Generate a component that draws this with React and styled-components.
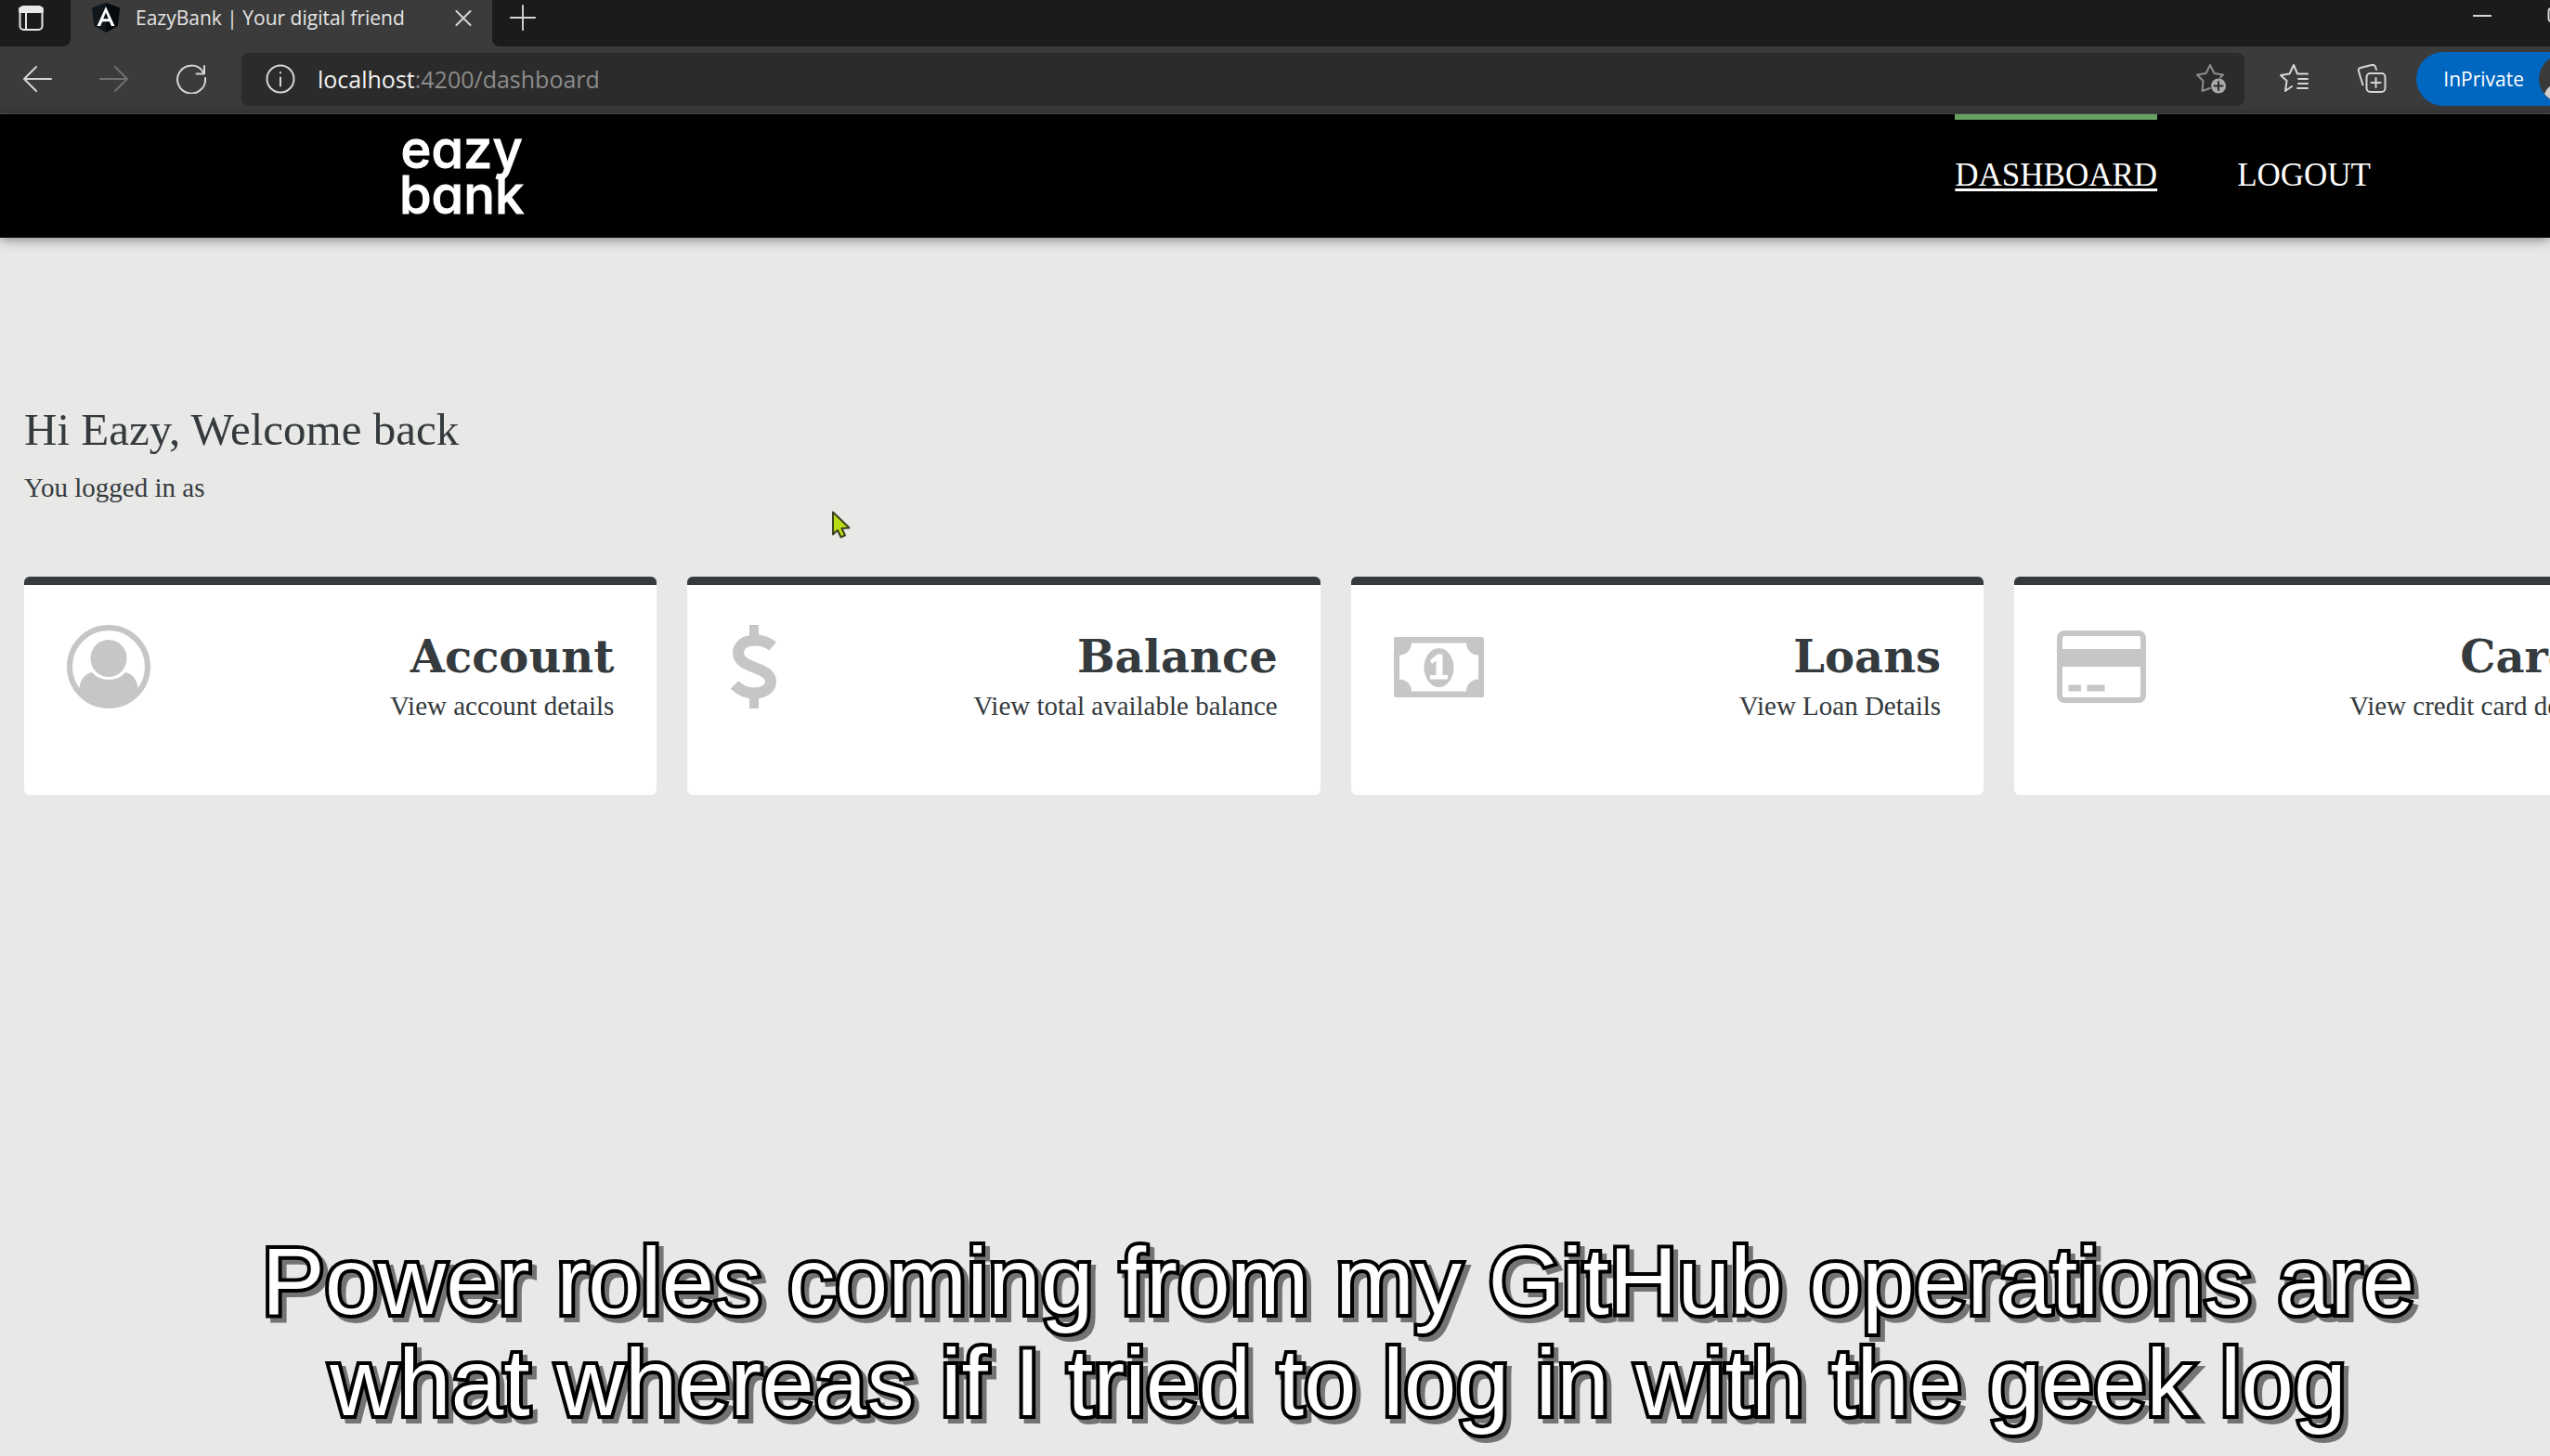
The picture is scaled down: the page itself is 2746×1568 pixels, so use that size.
import React from "react";
import styled, { createGlobalStyle } from "styled-components";

const GlobalStyle = createGlobalStyle`
  * { box-sizing: border-box; }
  html, body { margin: 0; background: #e8e8e6; }
  button { font: inherit; color: inherit; background: none; border: 0; padding: 0; display: flex; }
  svg { display: block; flex: none; }
`;

const uiFont = `"Open Sans", "Noto Sans", sans-serif`;
const serifFont = `"Liberation Serif", Georgia, serif`;

const Screen = styled.div`
  position: relative;
  min-height: 100vh;
  overflow: hidden;
  color: #343a3d;
  font-family: ${serifFont};
`;

/* ---------- browser chrome ---------- */
const Chrome = styled.header`
  background: #3b3b3b;
  color: #e4e4e4;
  font-family: ${uiFont};
  border-bottom: 1px solid #555;
`;
const TabStrip = styled.div`
  display: flex;
  height: 50px;
  background: #3b3b3b;
`;
const StripStart = styled.div`
  width: 76px;
  padding: 5px 0 0 19px;
  background: #1b1b1b;
  border-bottom-right-radius: 8px;
`;
const Tab = styled.div`
  display: flex;
  width: 454px;
  height: 38px;
  align-items: center;
  padding: 0 22px;
`;
const TabTitle = styled.span`
  flex: 1;
  margin-left: 16px;
  font-size: 21px;
  line-height: 32px;
  white-space: nowrap;
`;
const StripRest = styled.div`
  display: flex;
  flex: 1;
  height: 50px;
  justify-content: space-between;
  padding: 4px 0 0 18px;
  background: #1b1b1b;
  border-bottom-left-radius: 8px;
`;
const WindowControls = styled.div`
  display: flex;
  gap: 60px;
  margin-right: -17px;
`;
const Toolbar = styled.div`
  display: flex;
  height: 72px;
  align-items: center;
  padding: 0 0 2px 24px;
`;
const NavButtons = styled.div`
  display: flex;
  gap: 51px;
  margin-right: 38px;
`;
const AddressBar = styled.div`
  display: flex;
  flex: 1;
  height: 57px;
  align-items: center;
  padding: 0 20px 0 26px;
  border-radius: 8px;
  background: #2b2b2b;
`;
const Url = styled.span`
  flex: 1;
  margin-left: 24px;
  font-size: 25px;
  line-height: 32px;
  color: #8c8c8c;
  b { font-weight: 400; color: #f2f2f2; }
`;
const ToolButtons = styled.div`
  display: flex;
  gap: 51px;
  margin: 0 32px 0 38px;
`;
const PrivatePill = styled.button`
  && {
    display: flex;
    height: 58px;
    align-items: center;
    gap: 16px;
    margin-right: -44px;
    padding: 0 4px 0 29px;
    border-radius: 29px;
    background: #0067c0;
    color: #fff;
    font-size: 21px;
  }
`;

/* ---------- site ---------- */
const SiteNav = styled.nav`
  position: relative;
  display: flex;
  height: 133px;
  justify-content: space-between;
  padding: 0 193px 0 430px;
  background: #000;
  color: #fff;
  box-shadow: 0 2px 12px rgba(0, 0, 0, 0.45);
`;
const Logo = styled.a`
  align-self: center;
  padding-bottom: 8px;
  color: #fff;
  text-align: center;
  text-decoration: none;
  font-family: Inter, sans-serif;
  font-feature-settings: "cv11";
  font-size: 56px;
  font-weight: 500;
  line-height: 49px;
  -webkit-text-stroke: 1px #fff;
  span { display: block; }
`;
const Links = styled.div`
  display: flex;
  gap: 86px;
`;
const NavLink = styled.a`
  display: flex;
  align-items: center;
  padding-bottom: 8px;
  border-top: 6px solid ${(p) => (p.$active ? "#68a063" : "transparent")};
  color: #fff;
  font-size: 35px;
  line-height: 40px;
  text-decoration: ${(p) => (p.$active ? "underline" : "none")};
  text-decoration-thickness: 3px;
  text-underline-offset: 3px;
`;
const Main = styled.main`
  padding: 179px 0 0 26px;
`;
const Greeting = styled.h1`
  margin: 0 0 14px;
  font-size: 49px;
  font-weight: 400;
  line-height: 56px;
`;
const Note = styled.p`
  margin: 0;
  font-size: 29px;
  line-height: 40px;
`;
const Cards = styled.section`
  display: grid;
  grid-auto-flow: column;
  grid-auto-columns: 25.05%;
  gap: 33px;
  margin-top: 76px;
`;
const Card = styled.a`
  display: flex;
  justify-content: space-between;
  padding: 43px 46px 76px;
  border-top: 9px solid #343a3d;
  border-radius: 6px;
  background: #fff;
  color: inherit;
  text-decoration: none;
`;
const CardText = styled.div`
  padding-top: 6px;
  text-align: right;
`;
const CardTitle = styled.h2`
  margin: 0 0 5px;
  font-family: "DejaVu Serif", serif;
  font-size: 48px;
  font-weight: 700;
  line-height: 56px;
`;
const Pointer = styled.svg`
  position: absolute;
  left: 895px;
  top: 550px;
`;
const Caption = styled.p`
  position: absolute;
  left: 136px;
  right: 0;
  bottom: 24px;
  margin: 0;
  color: #fff;
  font-family: "Liberation Sans", Arial, sans-serif;
  font-size: 102px;
  line-height: 109px;
  text-align: center;
  -webkit-text-stroke: 8px #000;
  paint-order: stroke fill;
  stroke-linejoin: round;
  filter: drop-shadow(5px 5px 0 rgba(0, 0, 0, 0.5));
  span { display: block; white-space: nowrap; }
`;

/* ---------- icons ---------- */
const Line = ({ size = 32, color = "#d6d6d6", width = 2, children, box = 32, ...rest }) => (
  <svg width={size} height={size} viewBox={`0 0 ${box} ${box}`} fill="none" stroke={color}
    strokeWidth={width} strokeLinecap="round" strokeLinejoin="round" aria-hidden="true" {...rest}>
    {children}
  </svg>
);

const TabsIcon = () => (
  <Line color="#e8e8e8">
    <rect x="2.500" y="2" width="24" height="25" rx="4" />
    <path d="M3 4.500h23M3 7h23" strokeWidth="4" />
    <path d="M9 9v17" />
  </Line>
);
const AngularIcon = () => (
  <svg width="32" height="32" viewBox="0 0 32 32" aria-hidden="true">
    <path d="M16 0L31 5.500 28.700 25 16 32 3.300 25 1 5.500z" fill="#12171c" />
    <path d="M16 0L31 5.500 28.700 25 16 32z" fill="#050a0e" />
    <path d="M16 4L6.500 25h3.700l2-4.800h7.700l2 4.800h3.600zM16 10.500l2.800 6.700h-5.600z" fill="#fff" />
  </svg>
);
const StarAddIcon = () => (
  <Line color="#8d8d8d">
    <path d="M15 26l-8.500 3 1-11L1 11.500l9.500-1.500L15 1l4.500 9 9.500 1.500-3 3" />
    <circle cx="24" cy="23.500" r="8" fill="#a8a8a8" stroke="none" />
    <path d="M24 19v9M19.500 23.500h9" stroke="#2b2b2b" />
  </Line>
);
const FavoritesIcon = () => (
  <Line>
    <path d="M13 24l-7 5 1.500-11L1 12l9.500-1.500L15 1l4 9.500h11M20 16h10M20 21h10M19 26h11" />
  </Line>
);
const CollectionsIcon = () => (
  <Line>
    <rect x="10.500" y="10" width="20" height="20" rx="4" />
    <path d="M20.500 15v10M15.500 20h10M6.500 22.500L2 8Q1 5 4 4l12-3q3-.500 4 2l1 3" />
  </Line>
);
const Avatar = () => (
  <svg width="52" height="52" viewBox="0 0 52 52" aria-hidden="true">
    <circle cx="26" cy="26" r="26" fill="#3a3a3a" />
    <circle cx="26" cy="20" r="9" fill="#d0d0d0" />
    <path d="M6 42q4-12 20-12t20 12q-8 10-20 10T6 42z" fill="#d0d0d0" />
  </svg>
);

const grey = "#c4c6c7";
const AccountIcon = () => (
  <svg width="90" height="90" viewBox="0 0 90 90" fill={grey} aria-hidden="true">
    <circle cx="45" cy="45" r="42" fill="none" stroke={grey} strokeWidth="6" />
    <ellipse cx="45" cy="36" rx="19.500" ry="20" />
    <path d="M13 71C14 60 18 53 27 51q7 8 18 8t18-8c9 2 13 9 14 20Q65 88 45 88T13 71z" />
  </svg>
);
const DollarIcon = () => (
  <svg width="52" height="90" viewBox="0 0 52 90" fill="none" stroke={grey} strokeWidth="12" aria-hidden="true">
    <path d="M26 0v15M26 75v15" strokeWidth="10" />
    <path d="M46 23C40 18 34 16.500 28 16.500 16 16.500 9 22 9 30c0 18 35 14 35 31 0 8-8 12.500-18 12.500-8 0-15-3-21-9" />
  </svg>
);
const LoanIcon = () => (
  <svg width="97" height="90" viewBox="0 0 97 90" aria-hidden="true">
    <rect y="13" width="97" height="65" rx="2" fill={grey} />
    <path d="M19 19.500h59a13 13 0 0 0 13 13v26a13 13 0 0 0-13 13H19a13 13 0 0 0-13-13v-26a13 13 0 0 0 13-13z" fill="#fff" />
    <ellipse cx="48.500" cy="46" rx="16" ry="21" fill={grey} />
    <path d="M39 38l8-6.500h5.500V54H58v4.500H39V54h6.500V38.500L41 42z" fill="#fff" />
  </svg>
);
const CreditIcon = () => (
  <svg width="96" height="90" viewBox="0 0 96 90" fill={grey} aria-hidden="true">
    <rect x="3" y="9" width="90" height="72" rx="5" fill="none" stroke={grey} strokeWidth="6" />
    <path d="M3 26h90v19H3zM12.500 64.500H26v7H12.500zM32.500 64.500h19v7h-19z" />
  </svg>
);

const cards = [
  { title: "Account", text: "View account details", Icon: AccountIcon },
  { title: "Balance", text: "View total available balance", Icon: DollarIcon },
  { title: "Loans", text: "View Loan Details", Icon: LoanIcon },
  { title: "Cards", text: "View credit card details", Icon: CreditIcon },
];

export default function App() {
  return (
    <Screen>
      <GlobalStyle />
      <Chrome>
        <TabStrip>
          <StripStart>
            <button aria-label="Tab actions"><TabsIcon /></button>
          </StripStart>
          <Tab>
            <AngularIcon />
            <TabTitle>EazyBank | Your digital friend</TabTitle>
            <button aria-label="Close tab">
              <Line size={18} box={18}><path d="M1.500 2l15 15M16.500 2l-15 15" /></Line>
            </button>
          </Tab>
          <StripRest>
            <button aria-label="New tab">
              <Line size={30}><path d="M16 2v28M2 16h28" /></Line>
            </button>
            <WindowControls>
              <button aria-label="Minimize">
                <Line size={20} box={20}><path d="M0 13h20" /></Line>
              </button>
              <button aria-label="Maximize">
                <Line size={20} box={20}><rect x="1.500" y="5" width="17" height="14" rx="3" /></Line>
              </button>
            </WindowControls>
          </StripRest>
        </TabStrip>
        <Toolbar>
          <NavButtons>
            <button aria-label="Back"><Line><path d="M31 16H2M15 3L2 16l13 13" /></Line></button>
            <button aria-label="Forward">
              <Line color="#707070"><path d="M1 16h29M17 3l13 13-13 13" /></Line>
            </button>
            <button aria-label="Refresh">
              <Line><path d="M31 15A15 15 0 1 1 28 7.500l1.500 2.500M30 2v8.500h-8.500" /></Line>
            </button>
          </NavButtons>
          <AddressBar>
            <button aria-label="Site information">
              <Line><circle cx="16" cy="16" r="14.500" /><path d="M16 14.500v9M16 9v.500" /></Line>
            </button>
            <Url><b>localhost</b>:4200/dashboard</Url>
            <button aria-label="Add to favorites"><StarAddIcon /></button>
          </AddressBar>
          <ToolButtons>
            <button aria-label="Favorites"><FavoritesIcon /></button>
            <button aria-label="Collections"><CollectionsIcon /></button>
          </ToolButtons>
          <PrivatePill>InPrivate<Avatar /></PrivatePill>
        </Toolbar>
      </Chrome>

      <SiteNav>
        <Logo href="#home"><span>eazy</span><span>bank</span></Logo>
        <Links>
          <NavLink href="#dashboard" $active>DASHBOARD</NavLink>
          <NavLink href="#logout">LOGOUT</NavLink>
        </Links>
      </SiteNav>

      <Main>
        <Greeting>Hi Eazy, Welcome back</Greeting>
        <Note>You logged in as</Note>
        <Cards>
          {cards.map(({ title, text, Icon }) => (
            <Card key={title} href={`#${title.toLowerCase()}`}>
              <Icon />
              <CardText>
                <CardTitle>{title}</CardTitle>
                <Note>{text}</Note>
              </CardText>
            </Card>
          ))}
        </Cards>
      </Main>

      <Pointer width="22" height="30" viewBox="0 0 22 30" aria-hidden="true">
        <path d="M2 1.500v24l5-4.500 3.500 7.500 4.500-2-3.500-7.500 8-.500z" fill="#b9dd17" stroke="#3c4220" strokeWidth="2" strokeLinejoin="round" />
      </Pointer>

      <Caption>
        <span>Power roles coming from my GitHub operations are</span>
        <span>what whereas if I tried to log in with the geek log</span>
      </Caption>
    </Screen>
  );
}
